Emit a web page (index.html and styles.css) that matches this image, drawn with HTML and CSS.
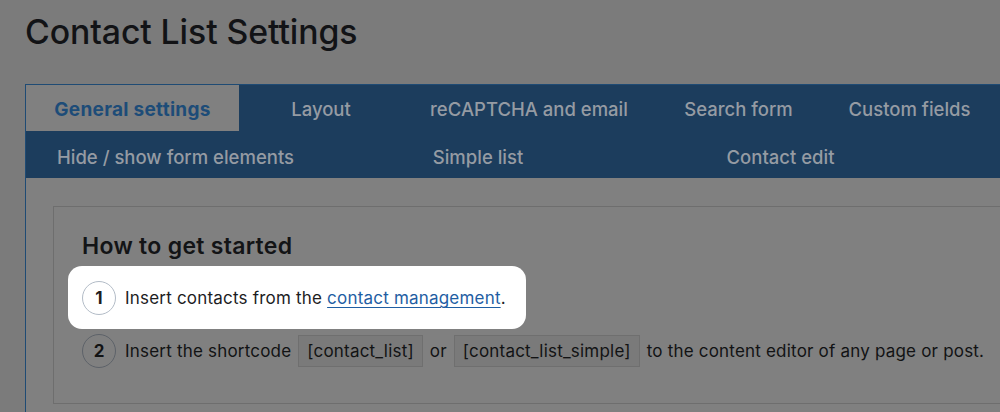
FILE: index.html
```html
<!DOCTYPE html>
<html lang="en">
<head>
<meta charset="utf-8">
<title>Contact List Settings</title>
<link rel="stylesheet" href="styles.css">
</head>
<body>
<div class="page">
  <h1 class="title">Contact List Settings</h1>
  <div class="settings">
    <nav class="tabs">
      <div class="tab-row row-one">
        <a class="tab active">General settings</a>
        <a class="tab">Layout</a>
        <a class="tab">reCAPTCHA and email</a>
        <a class="tab">Search form</a>
        <a class="tab">Custom fields</a>
        <a class="tab"></a>
      </div>
      <div class="tab-row row-two">
        <a class="tab">Hide / show form elements</a>
        <a class="tab">Simple list</a>
        <a class="tab">Contact edit</a>
        <a class="tab"></a>
      </div>
    </nav>
    <div class="panel">
      <section class="card">
        <h2 class="card-title">How to get started</h2>
        <ol class="steps">
          <li class="step highlight">
            <span class="num">1</span>
            <span class="step-text">Insert contacts from the <a class="link">contact management</a>.</span>
          </li>
          <li class="step">
            <span class="num">2</span>
            <span class="step-text">Insert the shortcode <code class="code">[contact_list]</code> or <code class="code">[contact_list_simple]</code> to the content editor of any page or post.</span>
          </li>
        </ol>
      </section>
    </div>
  </div>
</div>
</body>
</html>
```
FILE: styles.css
```css
html, body {
  margin: 0;
  padding: 0;
}
body {
  background: #7b7b7b;
  font-family: Inter, "Noto Sans", "Liberation Sans", sans-serif;
  color: #111;
  overflow: hidden;
  width: 1000px;
  height: 412px;
}
.page {
  padding: 12px 0 0 25px;
  width: 1200px;
}
.title {
  margin: 0;
  font-size: 33.8px;
  line-height: 40px;
  font-weight: 500;
  color: #121316;
  letter-spacing: -0.1px;
}
.settings {
  margin-top: 32px;
  border: 1px solid #1f4b74;
  border-right: none;
  background: #808080;
  width: 1150px;
}
.tabs {
  background: #1c3d5d;
}
.tab-row {
  display: flex;
}
.row-one {
  height: 46px;
}
.row-two {
  height: 47px;
}
.tab {
  display: flex;
  align-items: center;
  justify-content: center;
  padding-top: 2px;
  box-sizing: border-box;
  font-size: 18.5px;
  font-weight: 500;
  color: #959ba3;
  white-space: nowrap;
}
.row-two .tab {
  padding-top: 4px;
}
.tab.active {
  background: #808080;
  color: #1d4c78;
  font-weight: 700;
  font-size: 19px;
  letter-spacing: 0.3px;
}
.row-one .tab:nth-child(1) { width: 213px; }
.row-one .tab:nth-child(2) { width: 164px; }
.row-one .tab:nth-child(3) { width: 252px; }
.row-one .tab:nth-child(4) { width: 167px; }
.row-one .tab:nth-child(5) { width: 175px; }
.row-one .tab:nth-child(6) { flex: 1; }
.row-two .tab:nth-child(1) { width: 299px; }
.row-two .tab:nth-child(2) { width: 306px; }
.row-two .tab:nth-child(3) { width: 299px; }
.row-two .tab:nth-child(4) { flex: 1; }
.panel {
  padding: 28px 0 20px 27px;
}
.card {
  border: 1px solid #6e6e6e;
  height: 196px;
  padding: 0 0 0 28px;
}
.card-title {
  margin: 0;
  padding-top: 25px;
  font-size: 23px;
  line-height: 28px;
  font-weight: 600;
  letter-spacing: 0.3px;
  color: #131416;
}
.steps {
  list-style: none;
  margin: 6px 0 0 0;
  padding: 0;
}
.step {
  display: flex;
  align-items: center;
  font-size: 17px;
  line-height: 24px;
  letter-spacing: 0.2px;
  color: #121314;
}
.step.highlight {
  width: fit-content;
  margin-left: -14px;
  padding: 15px 20px 14px 14px;
  background: #ffffff;
  border-radius: 14px;
  color: #1d1d1f;
}
.step + .step {
  margin-top: 5px;
}
.num {
  flex: none;
  width: 32px;
  height: 32px;
  border: 1px solid #5d6269;
  border-radius: 50%;
  display: flex;
  align-items: center;
  justify-content: center;
  font-weight: 700;
  font-size: 17px;
  letter-spacing: 0;
  margin-right: 9px;
}
.highlight .num {
  border-color: #b3bcc7;
}
.link {
  color: #1f5ea3;
  text-decoration: underline;
  text-decoration-thickness: 1px;
  text-underline-offset: 3px;
}
.code {
  font-family: Inter, "Noto Sans", "Liberation Sans", sans-serif;
  font-size: 17px;
  letter-spacing: 0.2px;
  display: inline-block;
  padding: 3px 8px;
  margin: 0 2px;
  background: #7a7a7a;
  border: 1px solid #6f6f6f;
}
```
